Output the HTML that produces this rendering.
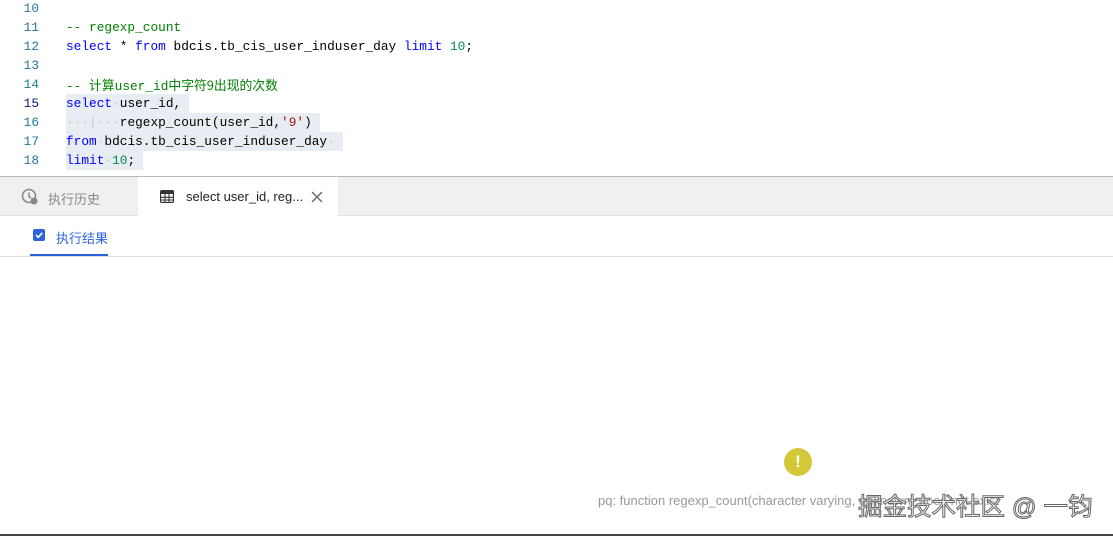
<!DOCTYPE html><html><head><style>
body{margin:0;width:1113px;height:536px;overflow:hidden;background:#fff;font-family:"Liberation Sans","Noto Sans CJK SC",sans-serif;position:relative}
.code{position:absolute;left:0;top:0;width:1113px;font-family:"Liberation Mono","Noto Sans CJK SC",monospace;font-size:12.8px;line-height:19px}
.ln{position:absolute;left:0;width:39px;text-align:right;color:#237893;height:19px;top:0}
.tx{position:absolute;left:66px;white-space:pre;color:#000;height:19px}
.k{color:#0000ff}.c{color:#008000}.n{color:#098658}.s{color:#a31515}
.hl{background:#e8edf3;display:inline-block;height:19px;padding-right:8px}
.ws{color:#c8c8c8}
</style></head><body>
<div class="code" style="top:-1px">
<div class="ln" style="top:0">10</div>
<div class="ln" style="top:19px">11</div><div class="tx c" style="top:19px">-- regexp_count</div>
<div class="ln" style="top:38px">12</div><div class="tx" style="top:38px"><span class="k">select</span> * <span class="k">from</span> bdcis.tb_cis_user_induser_day <span class="k">limit</span> <span class="n">10</span>;</div>
<div class="ln" style="top:57px">13</div>
<div class="ln" style="top:76px">14</div><div class="tx c" style="top:76px;font-family:'Liberation Mono',monospace">-- <span style="font-family:'Noto Sans CJK SC',sans-serif">计算</span>user_id<span style="font-family:'Noto Sans CJK SC',sans-serif">中字符9出现的次数</span></div>
<div class="ln" style="top:95px;color:#0b216f">15</div><div class="tx" style="top:95px"><span class="hl"><span class="k">select</span><span class="ws">·</span>user_id,</span></div>
<div class="ln" style="top:114px">16</div><div class="tx" style="top:114px"><span class="hl"><span class="ws">···|···</span>regexp_count(user_id,<span class="s">'9'</span>)</span></div>
<div class="ln" style="top:133px">17</div><div class="tx" style="top:133px"><span class="hl"><span class="k">from</span><span class="ws">·</span>bdcis.tb_cis_user_induser_day<span class="ws">·</span></span></div>
<div class="ln" style="top:152px">18</div><div class="tx" style="top:152px"><span class="hl"><span class="k">limit</span><span class="ws">·</span><span class="n">10</span>;</span></div>
</div>
<div style="position:absolute;left:0;top:176px;width:1113px;height:1px;background:#b8b8b8"></div>
<div style="position:absolute;left:0;top:177px;width:1113px;height:38px;background:#eff0f2;border-bottom:1px solid #e0e0e0"></div>
<div style="position:absolute;left:138px;top:177px;width:200px;height:39px;background:#fff"></div>
<svg style="position:absolute;left:21px;top:188px" width="18" height="18" viewBox="0 0 18 18"><circle cx="8" cy="8" r="6.5" fill="none" stroke="#888" stroke-width="1.6"/><path d="M8 4.5V8.5L10 10" stroke="#888" stroke-width="1.5" fill="none"/><circle cx="13" cy="13" r="3.5" fill="#888"/></svg>
<div style="position:absolute;left:48px;top:189px;font-size:13px;color:#888">执行历史</div>
<svg style="position:absolute;left:160px;top:190px" width="14" height="13" viewBox="0 0 14 13"><rect x="0.5" y="0.5" width="13" height="12" rx="1.5" fill="none" stroke="#333" stroke-width="1.3"/><rect x="0.5" y="0.5" width="13" height="3.5" fill="#333"/><path d="M1 7.3H13M1 10H13M5 4V12M9 4V12" stroke="#333" stroke-width="1.1"/></svg>
<div style="position:absolute;left:186px;top:189px;font-size:13px;color:#222">select user_id, reg...</div>
<svg style="position:absolute;left:311px;top:191px" width="12" height="12"><path d="M1 1L11 11M11 1L1 11" stroke="#666" stroke-width="1.4"/></svg>
<div style="position:absolute;left:33px;top:229px;width:12px;height:12px;background:#2d63d8;border-radius:2px"></div>
<svg style="position:absolute;left:33px;top:229px" width="12" height="12"><path d="M3 6L5.2 8.3L9.3 3.8" stroke="#fff" stroke-width="1.6" fill="none"/></svg>
<div style="position:absolute;left:56px;top:228px;font-size:13px;color:#2d63d8">执行结果</div>
<div style="position:absolute;left:0;top:256px;width:1113px;height:1px;background:#e0e0e0"></div>
<div style="position:absolute;left:30px;top:254px;width:78px;height:2px;background:#2d63d8"></div>
<div style="position:absolute;left:784px;top:448px;width:28px;height:28px;border-radius:50%;background:#d4c838;color:#fff;font-weight:bold;font-size:17px;text-align:center;line-height:28px">!</div>
<div style="position:absolute;left:598px;top:493px;font-size:13px;color:#999;white-space:nowrap">pq: function regexp_count(character varying, unknown) does not exist</div>
<div style="position:absolute;left:858px;top:488px;font-size:24.5px;color:#fff;-webkit-text-stroke:1px #666;white-space:nowrap">掘金技术社区 @ 一钧</div>
<div style="position:absolute;left:0;top:534px;width:1113px;height:2px;background:#444"></div>
</body></html>
